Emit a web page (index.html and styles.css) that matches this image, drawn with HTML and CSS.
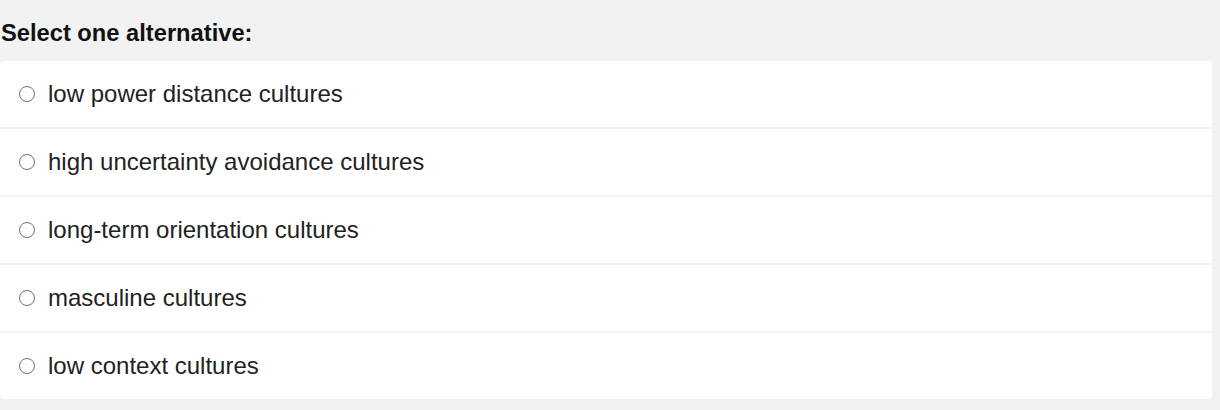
FILE: index.html
```html
<!DOCTYPE html>
<html lang="en">
<head>
<meta charset="utf-8">
<title>Select one alternative</title>
<link rel="stylesheet" href="styles.css">
</head>
<body>
<div class="question">
  <div class="prompt">Select one alternative:</div>
  <div class="options">
    <label class="option"><span class="radio"></span><span class="label">low power distance cultures</span></label>
    <label class="option"><span class="radio"></span><span class="label">high uncertainty avoidance cultures</span></label>
    <label class="option"><span class="radio"></span><span class="label">long-term orientation cultures</span></label>
    <label class="option"><span class="radio"></span><span class="label">masculine cultures</span></label>
    <label class="option"><span class="radio"></span><span class="label">low context cultures</span></label>
  </div>
</div>
</body>
</html>
```

FILE: styles.css
```css
html, body {
  margin: 0;
  padding: 0;
  background: #f2f2f2;
}
body {
  font-family: "Liberation Sans", Arial, sans-serif;
  color: #222;
}
.question {
  width: 1212px;
  padding-top: 19px;
}
.prompt {
  font-weight: bold;
  font-size: 23.7px;
  line-height: 28px;
  color: #111;
  padding-left: 1px;
  margin-bottom: 14px;
}
.options {
  background: #fff;
  border-radius: 4px;
  overflow: hidden;
  display: flex;
  flex-direction: column;
}
.option {
  display: flex;
  align-items: center;
  height: 66px;
  padding-left: 19px;
  border-bottom: 2px solid #f2f2f2;
  font-size: 24px;
  color: #222;
}
.option:last-child {
  border-bottom: none;
}
.radio {
  width: 14px;
  height: 14px;
  border: 1px solid #6f6f6f;
  border-radius: 50%;
  flex: none;
  margin-right: 13px;
  margin-top: -1px;
}
```
